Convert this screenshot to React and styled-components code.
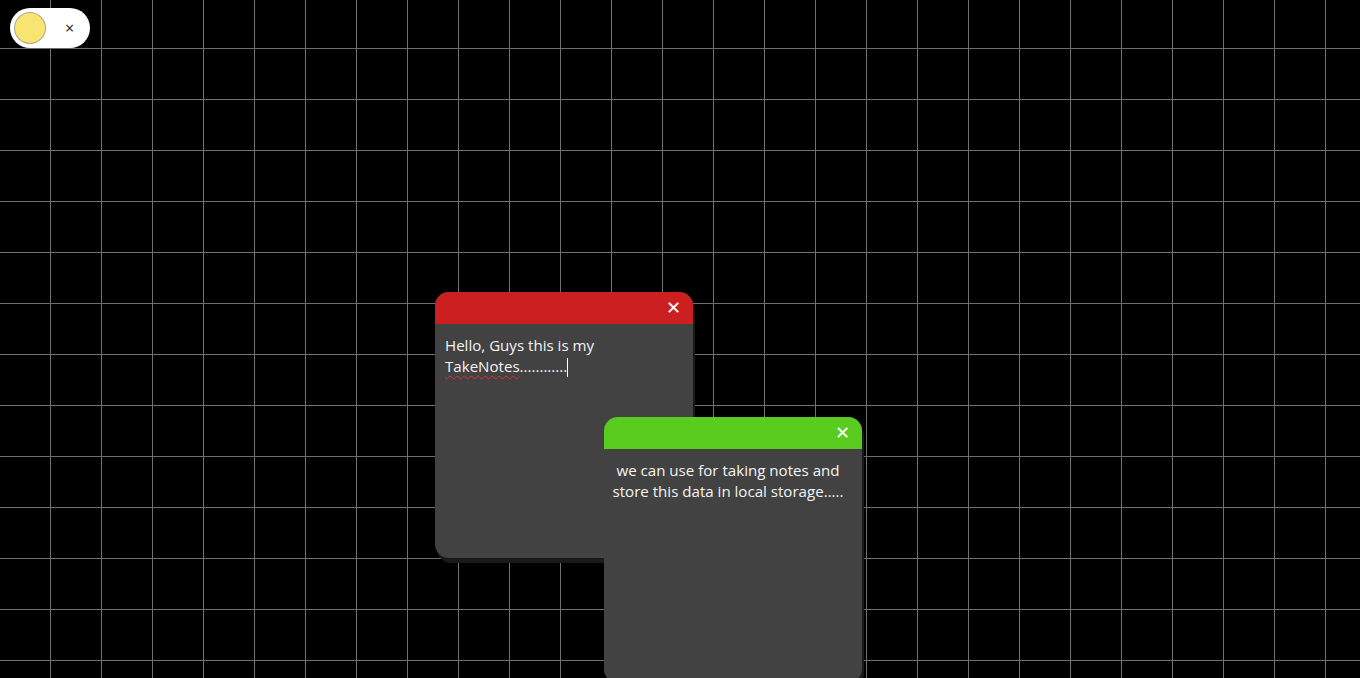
import React from "react";
import styled, { createGlobalStyle } from "styled-components";

const GlobalStyle = createGlobalStyle`
  html, body {
    margin: 0;
    padding: 0;
    background: #000;
  }
  body {
    font-family: "Open Sans", "Noto Sans", sans-serif;
    overflow: hidden;
  }
`;

const Board = styled.main`
  position: relative;
  width: 100vw;
  height: 100vh;
  background-color: #000;
  background-image: linear-gradient(to right, #6f6f6f 1px, transparent 1px),
    linear-gradient(to bottom, #6f6f6f 1px, transparent 1px);
  background-size: 51px 51px;
  background-position: 50px 48px;
  padding: 8px 10px;
  box-sizing: border-box;
`;

const Toggle = styled.div`
  width: 80px;
  height: 40px;
  border-radius: 20px;
  background: #fff;
  display: flex;
  align-items: center;
  padding: 0 5px;
  box-sizing: border-box;
`;

const Knob = styled.span`
  width: 30px;
  height: 30px;
  border-radius: 50%;
  background: #f8e470;
  box-shadow: 0 0 0 1px #a8a890;
`;

const ToggleClose = styled.span`
  margin-left: 20px;
  font-size: 16px;
  color: #222;
  line-height: 1;
`;

const Note = styled.section`
  position: absolute;
  left: ${(p) => p.$x}px;
  top: ${(p) => p.$y}px;
  width: 258px;
  height: 266px;
  background: #424242;
  border-radius: 14px;
  box-shadow: 2px 5px 0 #1a1a1a;
  overflow: hidden;
  display: flex;
  flex-direction: column;
`;

const NoteHead = styled.header`
  height: 32px;
  flex: none;
  background: ${(p) => p.$color};
  display: flex;
  justify-content: flex-end;
  align-items: center;
  padding-right: 12px;
`;

const CloseBtn = styled.span`
  color: #fff;
  font-family: "DejaVu Sans", sans-serif;
  font-weight: bold;
  font-size: 18px;
  line-height: 1;
`;

const NoteBody = styled.div`
  padding: ${(p) => (p.$center ? "11px 16px 11px 6px" : "11px 10px")};
  color: #f4f4f4;
  font-size: 15.1px;
  line-height: 21px;
  text-align: ${(p) => (p.$center ? "center" : "left")};
`;

const Line = styled.span`
  display: block;
  white-space: nowrap;
`;

const Misspelled = styled.span`
  text-decoration: underline wavy #d33;
  text-decoration-thickness: 1px;
  text-underline-offset: 3px;
`;

const Caret = styled.span`
  display: inline-block;
  width: 1px;
  height: 19px;
  background: #fff;
  vertical-align: -5px;
`;

export default function App() {
  return (
    <>
      <GlobalStyle />
      <Board>
        <Toggle>
          <Knob />
          <ToggleClose>×</ToggleClose>
        </Toggle>

        <Note $x={435} $y={292}>
          <NoteHead $color="#cc1f1f">
            <CloseBtn>✕</CloseBtn>
          </NoteHead>
          <NoteBody>
            <Line>Hello, Guys this is my</Line>
            <Line>
              <Misspelled>TakeNotes</Misspelled>............
              <Caret />
            </Line>
          </NoteBody>
        </Note>

        <Note $x={604} $y={417}>
          <NoteHead $color="#5acc1f">
            <CloseBtn>✕</CloseBtn>
          </NoteHead>
          <NoteBody $center>
            <Line>we can use for taking notes and</Line>
            <Line>store this data in local storage.....</Line>
          </NoteBody>
        </Note>
      </Board>
    </>
  );
}
